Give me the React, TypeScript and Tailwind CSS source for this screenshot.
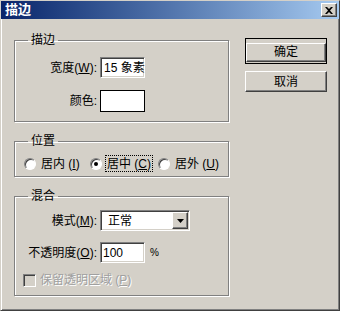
import React from "react";

const font = { fontFamily: '"Liberation Sans", "Noto Sans CJK SC", sans-serif' };

const sunken =
  "border border-t-[#808080] border-l-[#808080] border-r-white border-b-white shadow-[inset_1px_1px_0_#404040,inset_-1px_-1px_0_#d4d0c8]";
const raised =
  "border border-t-white border-l-white border-r-[#404040] border-b-[#404040] shadow-[inset_-1px_-1px_0_#808080]";
const group =
  "border border-[#808080] shadow-[inset_1px_1px_0_#fff,1px_1px_0_#fff] px-0";

function Legend({ children }: { children: React.ReactNode }) {
  return <legend className="ml-[13px] px-[3px] text-[12px] leading-[14px] text-black">{children}</legend>;
}

function Radio({ checked, label, hot, focus }: { checked?: boolean; label: string; hot: string; focus?: boolean }) {
  return (
    <div className="flex items-center gap-[3px]">
      <span className="relative w-[12px] h-[12px] rounded-full bg-white border border-t-[#808080] border-l-[#808080] border-r-white border-b-white shadow-[inset_1px_1px_0_#404040]">
        {checked && <span className="absolute left-[3px] top-[3px] w-[4px] h-[4px] rounded-full bg-black" />}
      </span>
      <span
        className={`px-[1px] h-[17px] flex items-center text-[12px] leading-[14px] ${
          focus ? "border border-dotted border-black" : "border border-transparent"
        }`}
      >
        {label} (<u>{hot}</u>)
      </span>
    </div>
  );
}

export default function App() {
  return (
    <div
      style={font}
      className="w-[340px] h-[311px] bg-[#d4d0c8] border border-[#d4d0c8] border-r-[#404040] border-b-[#404040] shadow-[inset_1px_1px_0_#fff,inset_-1px_-1px_0_#808080] flex flex-col overflow-hidden"
    >
      <div className="h-[18px] flex items-center justify-between pl-[4px] pr-[2px] bg-gradient-to-r from-[#0a246a] to-[#a6caf0]">
        <span className="text-white font-bold text-[13px] leading-[14px]">描边</span>
        <button className={`w-[16px] h-[14px] bg-[#d4d0c8] flex items-center justify-center ${raised}`}>
          <svg width="8" height="7" viewBox="0 0 8 7">
            <path d="M0 0h2l2 2 2-2h2L5 3.5 8 7H6L4 5 2 7H0l3-3.5z" fill="#000" />
          </svg>
        </button>
      </div>

      <div className="flex pl-[13px] pt-[14px]">
        <div className="w-[215px] flex flex-col">
          <fieldset className={group}>
            <Legend>描边</Legend>
            <div className="flex flex-col gap-[12px] pt-[10px] pb-[9px]">
              <div className="flex items-center">
                <label className="w-[85px] pr-[3px] text-right text-[12px] leading-[14px]">
                  宽度(<u>W</u>):
                </label>
                <div className={`w-[45px] h-[21px] bg-white flex items-center pl-[3px] text-[12px] whitespace-nowrap ${sunken}`}>
                  15 象素
                </div>
              </div>
              <div className="flex items-center">
                <label className="w-[85px] pr-[3px] text-right text-[12px] leading-[14px]">颜色:</label>
                <div className="w-[45px] h-[22px] bg-white border border-black" />
              </div>
            </div>
          </fieldset>

          <fieldset className={`${group} mt-[12px]`}>
            <Legend>位置</Legend>
            <div className="flex items-center pt-[7px] pb-[4px] pl-[9px]">
              <div className="w-[66px]">
                <Radio label="居内" hot="I" />
              </div>
              <div className="w-[68px]">
                <Radio label="居中" hot="C" checked focus />
              </div>
              <Radio label="居外" hot="U" />
            </div>
          </fieldset>

          <fieldset className={`${group} mt-[12px]`}>
            <Legend>混合</Legend>
            <div className="flex flex-col pt-[7px] pb-[8px]">
              <div className="flex items-center">
                <label className="w-[85px] pr-[3px] text-right text-[12px] leading-[14px]">
                  模式(<u>M</u>):
                </label>
                <div className={`w-[90px] h-[21px] bg-white flex items-center justify-between ${sunken} p-[1px]`}>
                  <span className="pl-[6px] text-[12px] leading-[14px]">正常</span>
                  <span className={`w-[16px] h-full bg-[#d4d0c8] flex items-center justify-center ${raised}`}>
                    <svg width="7" height="4" viewBox="0 0 7 4">
                      <path d="M0 0h7L3.5 4z" fill="#000" />
                    </svg>
                  </span>
                </div>
              </div>
              <div className="flex items-center mt-[11px]">
                <label className="w-[85px] pr-[3px] text-right text-[12px] leading-[14px] whitespace-nowrap">
                  不透明度(<u>O</u>):
                </label>
                <div className={`w-[45px] h-[21px] bg-white flex items-center pl-[2px] text-[12px] ${sunken}`}>100</div>
                <span className="ml-[5px] text-[10px]">%</span>
              </div>
              <div className="flex items-center mt-[10px] pl-[8px] gap-[4px]">
                <span className={`w-[13px] h-[13px] bg-[#d4d0c8] ${sunken}`} />
                <span className="text-[12px] leading-[14px] text-[#a0a0a0] [text-shadow:1px_1px_0_#fff]">
                  保留透明区域 (<u>P</u>)
                </span>
              </div>
            </div>
          </fieldset>
        </div>

        <div className="ml-[16px] pt-[5px] flex flex-col gap-[7px]">
          <div className="border border-black">
            <button className={`w-[80px] h-[19px] bg-[#d4d0c8] text-[12px] leading-[14px] ${raised}`}>确定</button>
          </div>
          <button className={`w-[82px] h-[21px] bg-[#d4d0c8] text-[12px] leading-[14px] ${raised}`}>取消</button>
        </div>
      </div>
    </div>
  );
}
